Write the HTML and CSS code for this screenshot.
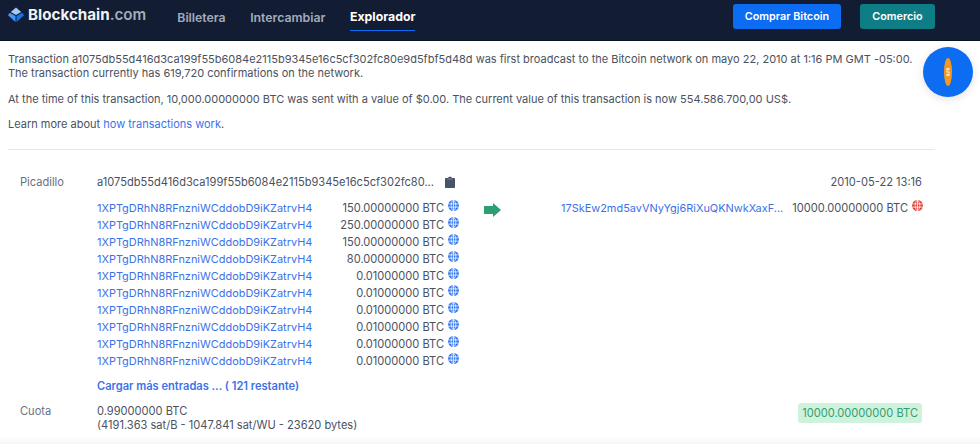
FILE: index.html
```html
<!DOCTYPE html>
<html lang="es">
<head>
  <meta charset="UTF-8">
  <meta name="viewport" content="width=device-width, initial-scale=1.0">
  <title>Blockchain.com Explorador</title>
  <link rel="stylesheet" href="styles.css">
</head>
<body>
  <!-- Header -->
  <header class="topbar">
    <a class="logo" href="#">
      <svg class="logo-mark" width="16" height="16" viewBox="0 0 16 16">
        <path d="M8 0.5 L13.2 5 L8 8 L2.8 5 Z" fill="#a3c8fa"/>
        <path d="M1.8 5.8 L7.5 9 L7.5 15 L0 8.2 Z" fill="#4a94f7"/>
        <path d="M14.2 5.8 L8.5 9 L8.5 15 L16 8.2 Z" fill="#1273f3"/>
      </svg>
      <span class="logo-name">Blockchain<span class="logo-tld">.com</span></span>
    </a>
    <nav class="topnav">
      <a href="#">Billetera</a>
      <a href="#">Intercambiar</a>
      <a href="#" class="active">Explorador</a>
    </nav>
    <div class="top-actions">
      <a href="#" class="btn btn-buy">Comprar Bitcoin</a>
      <a href="#" class="btn btn-trade">Comercio</a>
    </div>
  </header>

  <main class="content">
    <!-- Intro text -->
    <section class="intro">
      <p>Transaction a1075db55d416d3ca199f55b6084e2115b9345e16c5cf302fc80e9d5fbf5d48d was first broadcast to the Bitcoin network on mayo 22, 2010 at 1:16 PM GMT -05:00.<br>The transaction currently has 619,720 confirmations on the network.</p>
      <p>At the time of this transaction, 10,000.00000000 BTC was sent with a value of $0.00. The current value of this transaction is now 554.586.700,00 US$.</p>
      <p>Learn more about <a href="#">how transactions work</a>.</p>
    </section>

    <!-- Transaction -->
    <section class="tx">
      <div class="tx-row tx-hash">
        <div class="tx-label">Picadillo</div>
        <div class="hash-value">
          <span>a1075db55d416d3ca199f55b6084e2115b9345e16c5cf302fc80...</span>
          <svg class="clip" width="10" height="12" viewBox="0 0 10 12">
            <path d="M3 1.2 H4 C4.2 0.3 5.8 0.3 6 1.2 H7 V2 H9 C9.6 2 10 2.4 10 3 V11 C10 11.6 9.6 12 9 12 H1 C0.4 12 0 11.6 0 11 V3 C0 2.4 0.4 2 1 2 H3 Z" fill="#48536a"/>
            <path d="M2.5 2.6 H7.5 V3.4 H2.5 Z" fill="#8b93a3"/>
          </svg>
        </div>
        <div class="hash-date">2010-05-22 13:16</div>
      </div>

      <div class="tx-row tx-flow">
        <div class="inputs">
          <div class="io"><a href="#">1XPTgDRhN8RFnzniWCddobD9iKZatrvH4</a><span class="amount">150.00000000 BTC</span><svg class="globe"><use href="#globe"/></svg></div>
          <div class="io"><a href="#">1XPTgDRhN8RFnzniWCddobD9iKZatrvH4</a><span class="amount">250.00000000 BTC</span><svg class="globe"><use href="#globe"/></svg></div>
          <div class="io"><a href="#">1XPTgDRhN8RFnzniWCddobD9iKZatrvH4</a><span class="amount">150.00000000 BTC</span><svg class="globe"><use href="#globe"/></svg></div>
          <div class="io"><a href="#">1XPTgDRhN8RFnzniWCddobD9iKZatrvH4</a><span class="amount">80.00000000 BTC</span><svg class="globe"><use href="#globe"/></svg></div>
          <div class="io"><a href="#">1XPTgDRhN8RFnzniWCddobD9iKZatrvH4</a><span class="amount">0.01000000 BTC</span><svg class="globe"><use href="#globe"/></svg></div>
          <div class="io"><a href="#">1XPTgDRhN8RFnzniWCddobD9iKZatrvH4</a><span class="amount">0.01000000 BTC</span><svg class="globe"><use href="#globe"/></svg></div>
          <div class="io"><a href="#">1XPTgDRhN8RFnzniWCddobD9iKZatrvH4</a><span class="amount">0.01000000 BTC</span><svg class="globe"><use href="#globe"/></svg></div>
          <div class="io"><a href="#">1XPTgDRhN8RFnzniWCddobD9iKZatrvH4</a><span class="amount">0.01000000 BTC</span><svg class="globe"><use href="#globe"/></svg></div>
          <div class="io"><a href="#">1XPTgDRhN8RFnzniWCddobD9iKZatrvH4</a><span class="amount">0.01000000 BTC</span><svg class="globe"><use href="#globe"/></svg></div>
          <div class="io"><a href="#">1XPTgDRhN8RFnzniWCddobD9iKZatrvH4</a><span class="amount">0.01000000 BTC</span><svg class="globe"><use href="#globe"/></svg></div>
          <a href="#" class="load-more">Cargar más entradas ... ( 121 restante)</a>
        </div>
        <svg class="arrow" width="17" height="14" viewBox="0 0 17 14">
          <path d="M0 3 H9 V0 L17 7 L9 14 V11 H0 Z" fill="#2f9e73"/>
        </svg>
        <div class="outputs">
          <div class="io"><a href="#">17SkEw2md5avVNyYgj6RiXuQKNwkXaxF...</a><span class="amount">10000.00000000 BTC</span><svg class="globe globe-spent"><use href="#globe"/></svg></div>
        </div>
      </div>

      <div class="tx-row tx-fee">
        <div class="tx-label">Cuota</div>
        <div class="fee-value">0.99000000 BTC<br>(4191.363 sat/B - 1047.841 sat/WU - 23620 bytes)</div>
        <div class="total">10000.00000000 BTC</div>
      </div>
    </section>
  </main>

  <!-- Floating coin button -->
  <button class="coin-fab" aria-label="Bitcoin">
    <svg width="8" height="28" viewBox="0 0 8 28">
      <ellipse cx="4" cy="14" rx="4" ry="14" fill="#f7971e"/>
      <path d="M2.5 10 H5.5 V12 H3.5 V13.5 H5.5 V18 H2.5 V16 H4.5 V14.5 H2.5 Z" fill="#ffe9c8"/>
    </svg>
  </button>

  <div class="next-card"></div>

  <!-- Shared globe icon -->
  <svg width="0" height="0" class="defs">
    <symbol id="globe" viewBox="0 0 12 12">
      <circle cx="6" cy="6" r="6" fill="currentColor"/>
      <path d="M0 4.2 H12 M0 7.8 H12 M6 0 V12 M6 0 C2.6 3 2.6 9 6 12 M6 0 C9.4 3 9.4 9 6 12" fill="none" stroke="#fff" stroke-width="0.8"/>
    </symbol>
  </svg>
</body>
</html>
```
FILE: styles.css
```css
/* General Styles */
:root {
  --navy: #121d33;
  --blue: #0c6cf2;
  --link: #3b72e8;
  --teal: #0f7d85;
  --green: #2f9e73;
  --text: #4a5160;
  --muted: #677085;
}

html {
  overflow: hidden;
}

body {
  margin: 0;
  height: 444px;
  overflow: hidden;
  position: relative;
  display: flex;
  flex-direction: column;
  background: #fff;
  font-family: Inter, "Liberation Sans", sans-serif;
  font-size: 11.1px;
  line-height: 14px;
  color: var(--text);
}

a {
  color: var(--link);
  text-decoration: none;
}

.defs {
  position: absolute;
}

/* Top bar */
.topbar {
  display: flex;
  align-items: center;
  height: 41px;
  flex: none;
  box-sizing: border-box;
  padding: 0 45px 0 8px;
  background: var(--navy);
  border-bottom: 1px solid #0a1122;
}

.logo {
  display: flex;
  align-items: center;
  gap: 4px;
  margin-bottom: 11px;
  margin-top: 1px;
  height: 30px;
}

.logo-name {
  font-size: 15.2px;
  font-weight: 700;
  color: #f0f2f6;
}

.logo-tld {
  font-weight: 600;
  color: #a4acbb;
}

.topnav {
  display: flex;
  gap: 24.5px;
  margin-left: 31px;
  align-self: stretch;
}

.topnav a {
  display: flex;
  align-items: center;
  box-sizing: border-box;
  height: 31px;
  padding-top: 4px;
  font-size: 12.3px;
  font-weight: 600;
  color: #a4acbb;
}

.topnav a.active {
  color: #fff;
  font-weight: 700;
  border-bottom: 1px solid var(--blue);
}

.top-actions {
  display: flex;
  gap: 19px;
  margin-left: auto;
  margin-top: -7px;
}

.btn {
  display: flex;
  align-items: center;
  justify-content: center;
  height: 25px;
  border-radius: 3px;
  font-size: 10.8px;
  font-weight: 600;
  color: #fff;
}

.btn-buy {
  width: 108px;
  background: var(--blue);
}

.btn-trade {
  width: 75px;
  background: var(--teal);
}

/* Intro text */
.content {
  flex: 1;
  padding: 0 45px 0 8px;
}

.intro {
  padding: 11px 0 18px;
  border-bottom: 1px solid #e6e8ec;
  font-size: 11px;
}

.intro p {
  margin: 0 0 11px;
}

.intro p:first-child {
  margin-bottom: 12px;
}

.intro p:last-child {
  margin-bottom: 0;
}

/* Transaction */
.tx {
  padding: 24px 13px 0 12px;
}

.tx-row {
  display: flex;
}

.tx-label {
  width: 77px;
  flex: none;
  color: var(--muted);
}

.tx-hash {
  align-items: center;
  height: 16px;
}

.hash-value {
  display: flex;
  align-items: center;
  gap: 11px;
}

.hash-date {
  margin-left: auto;
}

.tx-flow {
  margin-top: 9px;
  padding-left: 77px;
}

.io {
  display: flex;
  align-items: center;
  height: 17px;
}

.io a {
  font-size: 10.95px;
}

.amount {
  margin-left: auto;
}

.globe {
  width: 11px;
  height: 11px;
  margin-left: 4px;
  margin-bottom: 4px;
  color: #3b7cf0;
}

.globe-spent {
  color: #e0483e;
}

.inputs {
  width: 362px;
  flex: none;
}

.arrow {
  flex: none;
  margin: 4px 0 0 25px;
}

.outputs {
  width: 362px;
  flex: none;
  margin-left: 60px;
}

.load-more {
  display: block;
  margin-top: 10px;
  font-weight: 600;
}

.tx-fee {
  margin-top: 11px;
}

.total {
  margin-left: auto;
  margin-top: -1px;
  height: 20px;
  padding: 0 4px;
  line-height: 20px;
  border-radius: 3px;
  background: #cff2dd;
  color: var(--green);
}

/* Floating coin button */
.coin-fab {
  position: absolute;
  top: 47px;
  left: 923px;
  width: 50px;
  height: 50px;
  padding: 0;
  display: flex;
  align-items: center;
  justify-content: center;
  border: none;
  border-radius: 50%;
  background: var(--blue);
  box-shadow: 0 2px 10px rgba(0, 0, 0, 0.12);
}

/* Top edge of the next card */
.next-card {
  flex: none;
  height: 8px;
  background: linear-gradient(#fff, #f6f6f7);
}
```
